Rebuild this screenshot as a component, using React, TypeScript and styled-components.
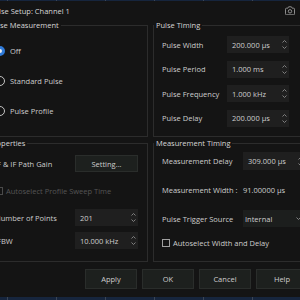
import React from 'react';
import styled, { createGlobalStyle } from 'styled-components';

const GlobalStyle = createGlobalStyle`
  html, body { margin: 0; padding: 0; background: #141414; }
  body {
    font-family: "Open Sans", "Noto Sans", sans-serif;
    font-size: 7.5px;
    color: #cdcdcd;
  }
  * { box-sizing: border-box; }
`;

const Screen = styled.div`
  width: 300px;
  height: 300px;
  overflow: hidden;
  background: #141414;
  display: flex;
  flex-direction: column;
`;

const Strip = styled.div<{ $h: number }>`
  flex: none;
  width: 100%;
  height: ${p => p.$h}px;
  background: linear-gradient(to right, #3b4656 0 1px, transparent 1px) 7px 0 / 49px 100% repeat-x, #16253d;
`;

const Dialog = styled.div`
  flex: none;
  height: 296px;
  width: 350px;
  margin-left: -20px;
  display: flex;
  flex-direction: column;
  background: #141414;
`;

const TitleBar = styled.div`
  height: 19px;
  display: flex;
  align-items: center;
  justify-content: space-between;
  padding: 0 35px 0 10px;
  color: #d6d6d6;
`;

const Body = styled.div`
  display: grid;
  grid-template-columns: 162px 170px;
  grid-template-rows: 117px 124px;
  column-gap: 5px;
  row-gap: 1px;
  padding-left: 6px;
`;

const Group = styled.fieldset<{ $pt: number }>`
  margin: 0;
  min-width: 0;
  border: 1px solid #2c2c2c;
  padding: ${p => p.$pt}px 9px 0 8px;
`;

const Legend = styled.legend`
  padding: 0 2px;
  margin-left: -8px;
  line-height: 10px;
  font-size: 7.5px;
  color: #d6d6d6;
`;

const RadioList = styled.div`
  display: flex;
  flex-direction: column;
  gap: 18px;
`;

const RadioRow = styled.div`
  display: flex;
  align-items: center;
  gap: 5px;
  height: 12px;
`;

const RadioDot = styled.span<{ $on?: boolean }>`
  flex: none;
  width: 10px;
  height: 10px;
  border-radius: 50%;
  border: ${p => (p.$on ? '3px solid #2f7ad8' : '1.5px solid #c4c4c4')};
  background: ${p => (p.$on ? '#eeeeee' : 'transparent')};
`;

const Form = styled.div<{ $cols: string; $rows: string; $gap?: number }>`
  display: grid;
  grid-template-columns: ${p => p.$cols};
  grid-template-rows: ${p => p.$rows};
  row-gap: ${p => p.$gap ?? 0}px;
  align-items: center;
`;

const Label = styled.span<{ $dim?: boolean }>`
  white-space: nowrap;
  color: ${p => (p.$dim ? '#545454' : '#cdcdcd')};
`;

const Field = styled.div<{ $h?: number }>`
  height: ${p => p.$h ?? 17}px;
  background: #1f1f1f;
  display: flex;
  align-items: center;
  justify-content: space-between;
  padding: 0 2px 0 5px;
  white-space: nowrap;
`;

const Select = styled(Field)`
  background: #1c1e1d;
  padding: 0 4px 0 2px;
`;

const Arrows = styled.span`
  display: flex;
  flex-direction: column;
  gap: 3px;
  width: 6px;
  align-items: center;
`;

const CheckRow = styled.div`
  grid-column: 1 / -1;
  display: flex;
  align-items: center;
  gap: 3px;
  white-space: nowrap;
`;

const Box = styled.span<{ $dim?: boolean }>`
  flex: none;
  width: 8px;
  height: 8px;
  border: 1px solid ${p => (p.$dim ? '#4a4a4a' : '#a0a0a0')};
`;

const Button = styled.button<{ $w?: number }>`
  width: ${p => p.$w ?? 52}px;
  height: ${p => (p.$w ? 17 : 20)}px;
  padding: 0;
  background: #1d201e;
  border: 1px solid #2a2d2b;
  color: #cdcdcd;
  font: inherit;
`;

const Footer = styled.div`
  display: flex;
  gap: 5px;
  padding-left: 105px;
  margin-top: 7px;
`;

const Chev = ({ up }: { up?: boolean }) => (
  <svg width="5" height="3" viewBox="0 0 5 3">
    <polyline
      points={up ? '0.5,2.5 2.5,0.5 4.5,2.5' : '0.5,0.5 2.5,2.5 4.5,0.5'}
      fill="none"
      stroke="#8a8a8a"
      strokeWidth="0.9"
    />
  </svg>
);

const SpinBox = ({ value, h }: { value: string; h?: number }) => (
  <Field $h={h}>
    <span>{value}</span>
    <Arrows>
      <Chev up />
      <Chev />
    </Arrows>
  </Field>
);

const CameraIcon = () => (
  <svg width="10" height="9" viewBox="0 0 10 9">
    <path
      d="M1.5 2.2h1.3l0.8-1.4h2.8l0.8 1.4h1.3a1 1 0 0 1 1 1v4.6a1 1 0 0 1-1 1h-7a1 1 0 0 1-1-1v-4.6a1 1 0 0 1 1-1z"
      fill="none"
      stroke="#9a9a9a"
      strokeWidth="0.9"
    />
    <circle cx="5" cy="5.3" r="1.7" fill="none" stroke="#9a9a9a" strokeWidth="0.9" />
  </svg>
);

export default function App() {
  return (
    <>
      <GlobalStyle />
      <Screen>
        <Strip $h={1} />
        <Dialog>
          <TitleBar>
            <span>Pulse Setup: Channel 1</span>
            <CameraIcon />
          </TitleBar>
          <Body>
            <Group $pt={15}>
              <Legend>Pulse Measurement</Legend>
              <RadioList>
                <RadioRow>
                  <RadioDot $on />
                  <span>Off</span>
                </RadioRow>
                <RadioRow>
                  <RadioDot />
                  <span>Standard Pulse</span>
                </RadioRow>
                <RadioRow>
                  <RadioDot />
                  <span>Pulse Profile</span>
                </RadioRow>
              </RadioList>
            </Group>
            <Group $pt={6}>
              <Legend>Pulse Timing</Legend>
              <Form $cols="65px 62px" $rows="repeat(4, 17px)" $gap={7.67}>
                <Label>Pulse Width</Label>
                <SpinBox value="200.000 µs" />
                <Label>Pulse Period</Label>
                <SpinBox value="1.000 ms" />
                <Label>Pulse Frequency</Label>
                <SpinBox value="1.000 kHz" />
                <Label>Pulse Delay</Label>
                <SpinBox value="200.000 µs" />
              </Form>
            </Group>
            <Group $pt={7}>
              <Legend>Properties</Legend>
              <Form $cols="1fr 63px" $rows="17px 37px 17px 29px">
                <Label>IF &amp; IF Path Gain</Label>
                <Button $w={63}>Setting...</Button>
                <CheckRow>
                  <Box $dim />
                  <Label $dim>Autoselect Profile Sweep Time</Label>
                </CheckRow>
                <Label>Number of Points</Label>
                <SpinBox value="201" />
                <Label>IFBW</Label>
                <SpinBox value="10.000 kHz" />
              </Form>
            </Group>
            <Group $pt={4}>
              <Legend>Measurement Timing</Legend>
              <Form $cols="81px 62px" $rows="18px 40px 17px 31px">
                <Label>Measurement Delay</Label>
                <SpinBox value="309.000 µs" h={18} />
                <Label>Measurement Width :</Label>
                <Label>91.00000 µs</Label>
                <Label>Pulse Trigger Source</Label>
                <Select>
                  <span>Internal</span>
                  <Chev />
                </Select>
                <CheckRow>
                  <Box />
                  <Label>Autoselect Width and Delay</Label>
                </CheckRow>
              </Form>
            </Group>
          </Body>
          <Footer>
            <Button>Apply</Button>
            <Button>OK</Button>
            <Button>Cancel</Button>
            <Button>Help</Button>
          </Footer>
        </Dialog>
        <Strip $h={3} />
      </Screen>
    </>
  );
}
